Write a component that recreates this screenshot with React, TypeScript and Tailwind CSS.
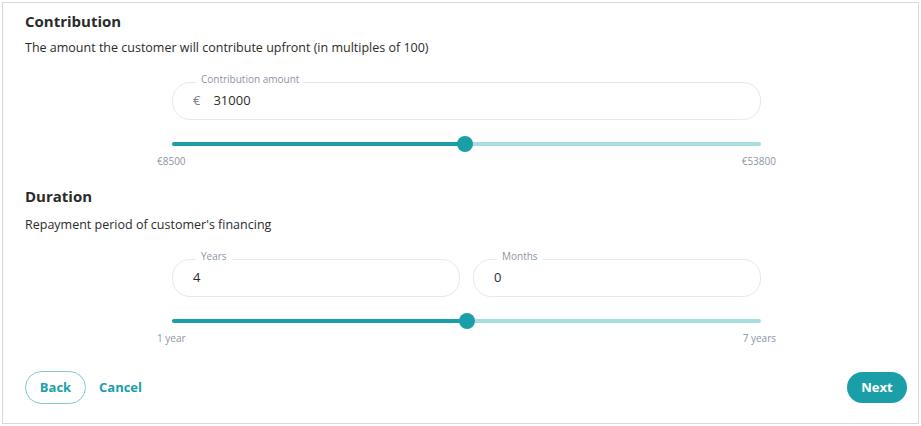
import React from 'react';

const teal = 'bg-[#1a9fa9]';

function Field({ label, prefix, value, className }: { label: string; prefix?: string; value: string; className?: string }) {
  return (
    <div className={`relative h-[38px] rounded-[18px] border border-[#e6e8ef] flex items-center pl-[20px] ${className ?? ''}`}>
      <span className="absolute -top-[11px] left-[23px] bg-white px-[5px] text-[10px] leading-[14px] text-[#8e95a5]">{label}</span>
      {prefix && <span className="text-[13px] text-[#7a808c] mr-[13px]">{prefix}</span>}
      <span className="text-[13px] text-[#2b2b2b]">{value}</span>
    </div>
  );
}

function Slider({ pct, min, max }: { pct: number; min: string; max: string }) {
  return (
    <div className="flex flex-col">
      <div className="relative h-[16px] flex items-center">
        <div className="h-[4px] w-full rounded-full bg-[#a6dde1] flex">
          <div className="h-full bg-[#1a9fa9] rounded-l-full" style={{ width: `${pct}%` }} />
        </div>
        <div
          className="absolute top-0 h-[16px] w-[16px] -ml-[8px] rounded-full bg-[#1a9fa9]"
          style={{ left: `${pct}%` }}
        />
      </div>
      <div className="flex justify-between -mx-[15px] mt-[2px] text-[10px] leading-[14px] text-[#8e95a5]">
        <span>{min}</span>
        <span>{max}</span>
      </div>
    </div>
  );
}

export default function App() {
  return (
    <div className="w-[921px] h-[426px] bg-white p-[2px]" style={{ fontFamily: '"Open Sans", sans-serif' }}>
      <div className="h-full border border-[#d9d9d9] flex flex-col px-[22px] pt-[8px]">
        <h2 className="text-[15px] leading-[20px] font-bold text-[#2b2b2b]">Contribution</h2>
        <p className="mt-[8px] text-[12.5px] leading-[18px] text-[#2b2b2b]">The amount the customer will contribute upfront (in multiples of 100)</p>
        <div className="ml-[147px] w-[589px] mt-[25px]">
          <Field label="Contribution amount" prefix="€" value="31000" />
          <div className="mt-[16px]">
            <Slider pct={49.67} min="€8500" max="€53800" />
          </div>
        </div>

        <h2 className="mt-[18px] text-[15px] leading-[20px] font-bold text-[#2b2b2b]">Duration</h2>
        <p className="mt-[10px] text-[12.5px] leading-[18px] text-[#2b2b2b]">Repayment period of customer's financing</p>
        <div className="ml-[147px] w-[589px] mt-[25px]">
          <div className="flex gap-[13px]">
            <Field label="Years" value="4" className="flex-1" />
            <Field label="Months" value="0" className="flex-1" />
          </div>
          <div className="mt-[16px]">
            <Slider pct={50} min="1 year" max="7 years" />
          </div>
        </div>

        <div className="mt-[26px] flex items-center">
          <button className="h-[33px] w-[61px] rounded-full border border-[#7fc9cf] text-[13px] font-bold text-[#1a9fa9]">Back</button>
          <button className="ml-[13px] text-[13px] font-bold text-[#1a9fa9]">Cancel</button>
          <button className={`ml-auto -mr-[11px] h-[31px] w-[60px] rounded-full ${teal} text-[13px] font-bold text-white`}>Next</button>
        </div>
      </div>
    </div>
  );
}
